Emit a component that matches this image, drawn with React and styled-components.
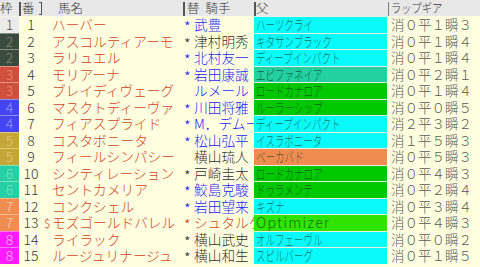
import React from "react";
import styled, { createGlobalStyle } from "styled-components";

const Global = createGlobalStyle`
  html, body {
    margin: 0;
    padding: 0;
    background: #ffffe0;
  }
  body {
    font-family: "Noto Sans CJK JP", "Noto Sans", sans-serif;
    font-weight: 300;
  }
`;

const COLS = "19px 24px 140px 71px 134px 92px";

const WAKU = {
  1: { bg: "#ebebeb", fg: "#505050" },
  2: { bg: "#3a4a3c", fg: "rgba(255,255,255,0.35)" },
  3: { bg: "#d0503e", fg: "rgba(255,190,150,0.6)" },
  4: { bg: "#4444f2", fg: "rgba(230,235,255,0.5)" },
  5: { bg: "#c6a636", fg: "rgba(255,255,225,0.4)" },
  6: { bg: "#26d0a4", fg: "rgba(220,255,240,0.45)" },
  7: { bg: "#f08c50", fg: "rgba(255,255,255,0.6)" },
  8: { bg: "#ff1cff", fg: "rgba(255,255,255,0.7)" },
};

const SIRE = {
  cyan: "#08fafa",
  teal: "#22d0a0",
  green: "#00c800",
  lime: "#2ee400",
  orange: "#f08c50",
};

const BLUE = "#1c1cff";
const DARK = "#303030";
const RED = "#d04428";

const horses = [
  { w: 1, no: 1, name: "ハーバー", mark: "*", jockey: "武豊", jc: BLUE, sire: "ハーツクライ", sc: "cyan", gear: "消０平１瞬３" },
  { w: 2, no: 2, name: "アスコルティアーモ", mark: "*", jockey: "津村明秀", jc: DARK, sire: "キタサンブラック", sc: "cyan", gear: "消０平１瞬４" },
  { w: 2, no: 3, name: "ラリュエル", mark: "*", jockey: "北村友一", jc: BLUE, sire: "ディープインパクト", sc: "cyan", gear: "消０平１瞬４" },
  { w: 3, no: 4, name: "モリアーナ", mark: "*", jockey: "岩田康誠", jc: BLUE, sire: "エピファネイア", sc: "teal", gear: "消０平２瞬１" },
  { w: 3, no: 5, name: "ブレイディヴェーグ", mark: "", jockey: "ルメール", jc: BLUE, sire: "ロードカナロア", sc: "green", gear: "消０平１瞬４" },
  { w: 4, no: 6, name: "マスクトディーヴァ", mark: "*", jockey: "川田将雅", jc: BLUE, sire: "ルーラーシップ", sc: "green", gear: "消０平０瞬５" },
  { w: 4, no: 7, name: "フィアスプライド", mark: "*", jockey: "M．デムーロ", jc: BLUE, sire: "ディープインパクト", sc: "cyan", gear: "消２平３瞬２" },
  { w: 5, no: 8, name: "コスタボニータ", mark: "*", jockey: "松山弘平", jc: BLUE, sire: "イスラボニータ", sc: "cyan", gear: "消１平５瞬３" },
  { w: 5, no: 9, name: "フィールシンパシー", mark: "", jockey: "横山琉人", jc: DARK, sire: "ベーカバド", sc: "orange", gear: "消０平５瞬３" },
  { w: 6, no: 10, name: "シンティレーション", mark: "*", jockey: "戸崎圭太", jc: DARK, sire: "ロードカナロア", sc: "green", gear: "消０平４瞬３" },
  { w: 6, no: 11, name: "セントカメリア", mark: "*", jockey: "鮫島克駿", jc: BLUE, sire: "ドゥラメンテ", sc: "green", gear: "消０平２瞬４" },
  { w: 7, no: 12, name: "コンクシェル", mark: "*", jockey: "岩田望来", jc: BLUE, sire: "キズナ", sc: "cyan", gear: "消０平３瞬４" },
  { w: 7, no: 13, name: "モズゴールドバレル", prefix: "$", mark: "*", jockey: "シュタルケ", jc: RED, sire: "Optimizer", sc: "lime", latin: true, gear: "消０平４瞬３" },
  { w: 8, no: 14, name: "ライラック", mark: "*", jockey: "横山武史", jc: DARK, sire: "オルフェーヴル", sc: "cyan", gear: "消０平０瞬２" },
  { w: 8, no: 15, name: "ルージュリナージュ", mark: "*", jockey: "横山和生", jc: DARK, sire: "スピルバーグ", sc: "cyan", gear: "消０平１瞬５" },
];

const Sheet = styled.div`
  width: 480px;
  height: 267px;
  overflow: hidden;
  background: #ffffe0;
`;

const HeaderRow = styled.div`
  display: grid;
  grid-template-columns: ${COLS};
  height: 16px;
  background: #e8e8e8;
  color: #383838;
  font-size: 12.5px;
  line-height: 16px;
`;

const HeadCell = styled.div`
  position: relative;
  padding-left: ${(p) => p.$pad || 0}px;
  white-space: nowrap;

  &::before {
    content: "";
    display: ${(p) => (p.$bar ? "block" : "none")};
    position: absolute;
    left: 0;
    top: 2px;
    bottom: 0;
    width: ${(p) => (p.$thin ? 1 : 2)}px;
    background: ${(p) => (p.$thin ? "#7a7a7a" : "#555")};
  }
`;

const Bracket = styled.span`
  position: absolute;
  right: 1px;
  top: 2px;
  bottom: 1px;
  width: 2px;
  border: 1px solid #555;
  border-left: none;
`;

const Gap = styled.span`
  display: inline-block;
  width: ${(p) => p.$w}px;
`;

const Squeeze = styled.span`
  display: inline-block;
  transform: scaleX(${(p) => p.$x});
  transform-origin: left center;
  white-space: nowrap;
  letter-spacing: ${(p) => p.$ls || 0}px;
`;

const Row = styled.div`
  display: grid;
  grid-template-columns: ${COLS};
  height: 16.5px;
  line-height: 15.5px;
`;

const WakuCell = styled.div`
  background: ${(p) => p.$bg};
  color: ${(p) => p.$fg};
  border-top: 1px solid rgba(255, 255, 228, 0.4);
  font-size: 14px;
  text-align: center;
`;

const NumCell = styled.div`
  color: #3a3a3a;
  font-size: 14px;
  text-align: center;
  padding-top: 1px;
`;

const NameCell = styled.div`
  display: flex;
  color: ${RED};
  font-size: 13.7px;
  white-space: nowrap;
  overflow: hidden;
  padding-top: 1px;
`;

const Prefix = styled.span`
  flex: none;
  width: 8px;
  padding-left: 1px;
  font-size: 12px;
`;

const JockeyCell = styled.div`
  display: flex;
  color: ${(p) => p.$color};
  font-size: 13.7px;
  white-space: nowrap;
  overflow: hidden;
  padding-top: 1px;
`;

const Mark = styled.span`
  flex: none;
  width: 10px;
  padding-left: 1px;
  padding-top: 4px;
  font-size: 15px;
  line-height: 12px;
`;

const SireCell = styled.div`
  background: ${(p) => p.$bg};
  border-top: 1px solid #ecece0;
  margin-right: 1px;
  padding-left: 2px;
  color: rgba(10, 60, 30, 0.72);
  font-size: 14px;
  overflow: hidden;
`;

const GearCell = styled.div`
  color: #5a5a5a;
  font-size: 13.5px;
  padding-left: 3px;
  padding-top: 1px;
  white-space: nowrap;
  overflow: hidden;
`;

export default function App() {
  return (
    <Sheet>
      <Global />
      <HeaderRow>
        <HeadCell>枠</HeadCell>
        <HeadCell $bar $pad={3}>
          番
          <Bracket />
        </HeadCell>
        <HeadCell $pad={15}>馬名</HeadCell>
        <HeadCell $bar $pad={4}>
          替<Gap $w={6} />騎手
        </HeadCell>
        <HeadCell $bar $pad={2}>父</HeadCell>
        <HeadCell $bar $thin $pad={3}>
          <Squeeze $x={0.82}>ラップギア</Squeeze>
        </HeadCell>
      </HeaderRow>
      {horses.map((h) => (
        <Row key={h.no}>
          <WakuCell $bg={WAKU[h.w].bg} $fg={WAKU[h.w].fg}>
            {h.w}
          </WakuCell>
          <NumCell>{h.no}</NumCell>
          <NameCell>
            <Prefix>{h.prefix || ""}</Prefix>
            {h.name}
          </NameCell>
          <JockeyCell $color={h.jc}>
            <Mark>{h.mark}</Mark>
            {h.jockey}
          </JockeyCell>
          <SireCell $bg={SIRE[h.sc]}>
            {h.latin ? (
              <Squeeze $x={1} $ls={1.4}>{h.sire}</Squeeze>
            ) : (
              <Squeeze $x={0.68}>{h.sire}</Squeeze>
            )}
          </SireCell>
          <GearCell>{h.gear}</GearCell>
        </Row>
      ))}
    </Sheet>
  );
}
